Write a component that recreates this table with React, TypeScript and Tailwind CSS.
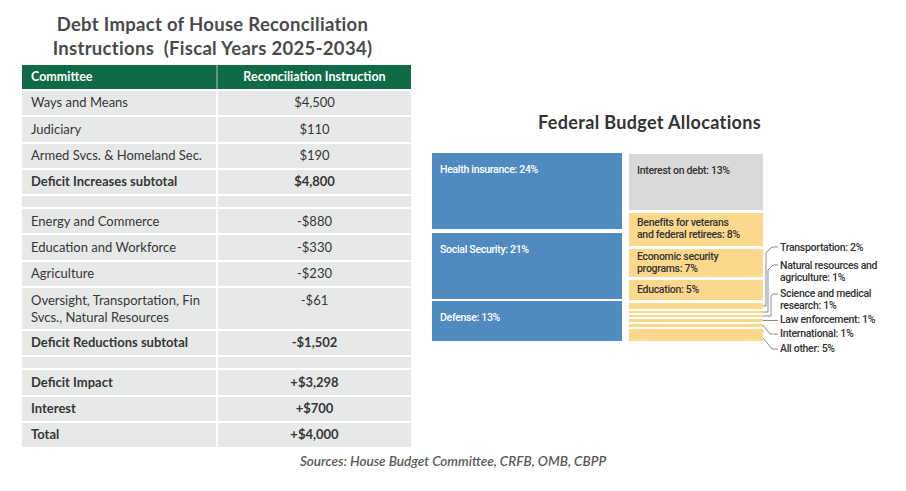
type Row = { name: string; value: string; bold?: boolean; spacer?: boolean; tall?: boolean };

const rows: Row[] = [
  { name: "Ways and Means", value: "$4,500" },
  { name: "Judiciary", value: "$110" },
  { name: "Armed Svcs. & Homeland Sec.", value: "$190" },
  { name: "Deficit Increases subtotal", value: "$4,800", bold: true },
  { name: "", value: "", spacer: true },
  { name: "Energy and Commerce", value: "-$880" },
  { name: "Education and Workforce", value: "-$330" },
  { name: "Agriculture", value: "-$230" },
  { name: "Oversight, Transportation, Fin Svcs., Natural Resources", value: "-$61", tall: true },
  { name: "Deficit Reductions subtotal", value: "-$1,502", bold: true },
  { name: "", value: "", spacer: true },
  { name: "Deficit Impact", value: "+$3,298", bold: true },
  { name: "Interest", value: "+$700", bold: true },
  { name: "Total", value: "+$4,000", bold: true },
];

const smallLabels = [
  { text: "Transportation: 2%", mt: "mt-[89px]" },
  { text: "Natural resources and agriculture: 1%", mt: "mt-[6px]" },
  { text: "Science and medical research: 1%", mt: "mt-[4px]" },
  { text: "Law enforcement: 1%", mt: "mt-[2px]" },
  { text: "International: 1%", mt: "mt-[2px]" },
  { text: "All other: 5%", mt: "mt-[3px]" },
];

function DebtTable() {
  return (
    <div className="flex flex-col gap-[2px] text-[13px] text-[#363636]">
      {/* Header */}
      <div className="grid grid-cols-[194px_193px] gap-[2px] h-[24px] bg-[#0e6b45] text-white font-bold text-[12.5px]">
        <div className="flex items-center pl-[9px]">Committee</div>
        <div className="flex items-center justify-center border-l-2 border-[#5d9a7d] -ml-[2px]">
          Reconciliation Instruction
        </div>
      </div>
      {rows.map((r, i) => (
        <div
          key={i}
          className={`grid grid-cols-[194px_193px] gap-[2px] ${r.spacer ? "h-[11px]" : r.tall ? "h-[41px]" : "h-[24.3px]"} ${r.bold ? "font-bold" : ""}`}
        >
          <div className={`bg-[#e7e9e8] pl-[9px] ${r.tall ? "pt-[4px] leading-[17px]" : "flex items-center"}`}>
            {r.name}
          </div>
          <div className={`bg-[#e7e9e8] ${r.tall ? "pt-[4px] text-center leading-[17px]" : "flex items-center justify-center"}`}>
            {r.value}
          </div>
        </div>
      ))}
    </div>
  );
}

function BudgetChart() {
  return (
    <div className="relative flex items-start font-['Roboto',sans-serif] font-medium text-[10.5px] tracking-[-0.3px]">
      {/* Left blue column */}
      <div className="w-[190px] shrink-0 flex flex-col">
        <div className="h-[76px] bg-[#4f8bc0] text-white px-[8px] pt-[9px]">Health insurance: 24%</div>
        <div className="h-[66px] mt-[4px] bg-[#4f8bc0] text-white px-[8px] pt-[9px]">Social Security: 21%</div>
        <div className="h-[40px] mt-[2px] bg-[#4f8bc0] text-white px-[8px] pt-[9px]">Defense: 13%</div>
      </div>
      {/* Right column */}
      <div className="w-[134px] shrink-0 ml-[7px] flex flex-col text-[#333]">
        <div className="h-[56px] mt-[1px] bg-[#d9d9d9] px-[8px] pt-[9px]">Interest on debt: 13%</div>
        <div className="h-[33px] mt-[3px] bg-[#fcd88c] px-[8px] pt-[4px] leading-[12px]">
          Benefits for veterans
          <br />
          and federal retirees: 8%
        </div>
        <div className="h-[28px] mt-[3px] bg-[#fcd88c] px-[8px] pt-[2px] leading-[12px]">
          Economic security
          <br />
          programs: 7%
        </div>
        <div className="h-[20px] mt-[3px] bg-[#fcd88c] px-[8px] pt-[4px] leading-[11px]">Education: 5%</div>
        <div className="h-[6px] mt-[3px] bg-[#fcd88c]" />
        <div className="h-[2px] mt-[2px] bg-[#fcd88c]" />
        <div className="h-[2px] mt-[2px] bg-[#fcd88c]" />
        <div className="h-[3px] mt-[2px] bg-[#fcd88c]" />
        <div className="h-[3px] mt-[2px] bg-[#fcd88c]" />
        <div className="h-[12px] mt-[2px] bg-[#fcd88c]" />
      </div>
      {/* Labels */}
      <div className="ml-[17px] shrink-0 w-[108px] flex flex-col text-[#333] leading-[12px]">
        {smallLabels.map((l) => (
          <div key={l.text} className={l.mt}>
            {l.text}
          </div>
        ))}
      </div>
      {/* Leader lines */}
      <svg
        className="absolute left-[331px] top-0"
        width="20"
        height="205"
        viewBox="0 0 20 205"
        fill="none"
        stroke="#8a8a8a"
        strokeWidth="1"
      >
        <path d="M0 153 H3 V100 L9 94 H15" />
        <path d="M0 159 H5 V117 L10 112 H15" />
        <path d="M0 163 H8 V143 L10 141 H15" />
        <path d="M0 167.5 H15" />
        <path d="M0 172 L7 181 H15" />
        <path d="M0 185 L9 196 H15" />
      </svg>
    </div>
  );
}

export default function App() {
  return (
    <div className="w-[906px] h-[491px] bg-white flex flex-col font-['Lato',sans-serif]">
      <div className="flex items-start">
        {/* Debt table */}
        <div className="ml-[22px] w-[389px] shrink-0 flex flex-col">
          <h1 className="mt-[12px] mb-[5px] pr-[8px] text-center text-[18.5px] leading-[24px] font-bold tracking-[0.3px] text-[#4a4a4a] whitespace-pre">
            {"Debt Impact of House Reconciliation\nInstructions  (Fiscal Years 2025-2034)"}
          </h1>
          <DebtTable />
        </div>

        {/* Budget treemap */}
        <div className="ml-[21px] w-[450px] shrink-0 flex flex-col">
          <h2 className="mt-[110px] mb-[19px] pl-[106px] text-[18px] leading-[24px] font-bold tracking-[0.35px] text-[#333]">
            Federal Budget Allocations
          </h2>
          <BudgetChart />
        </div>
      </div>

      <p className="mt-[6px] text-center text-[13.5px] leading-[16px] italic font-semibold text-[#5a5a5a]">
        Sources: House Budget Committee, CRFB, OMB, CBPP
      </p>
    </div>
  );
}
